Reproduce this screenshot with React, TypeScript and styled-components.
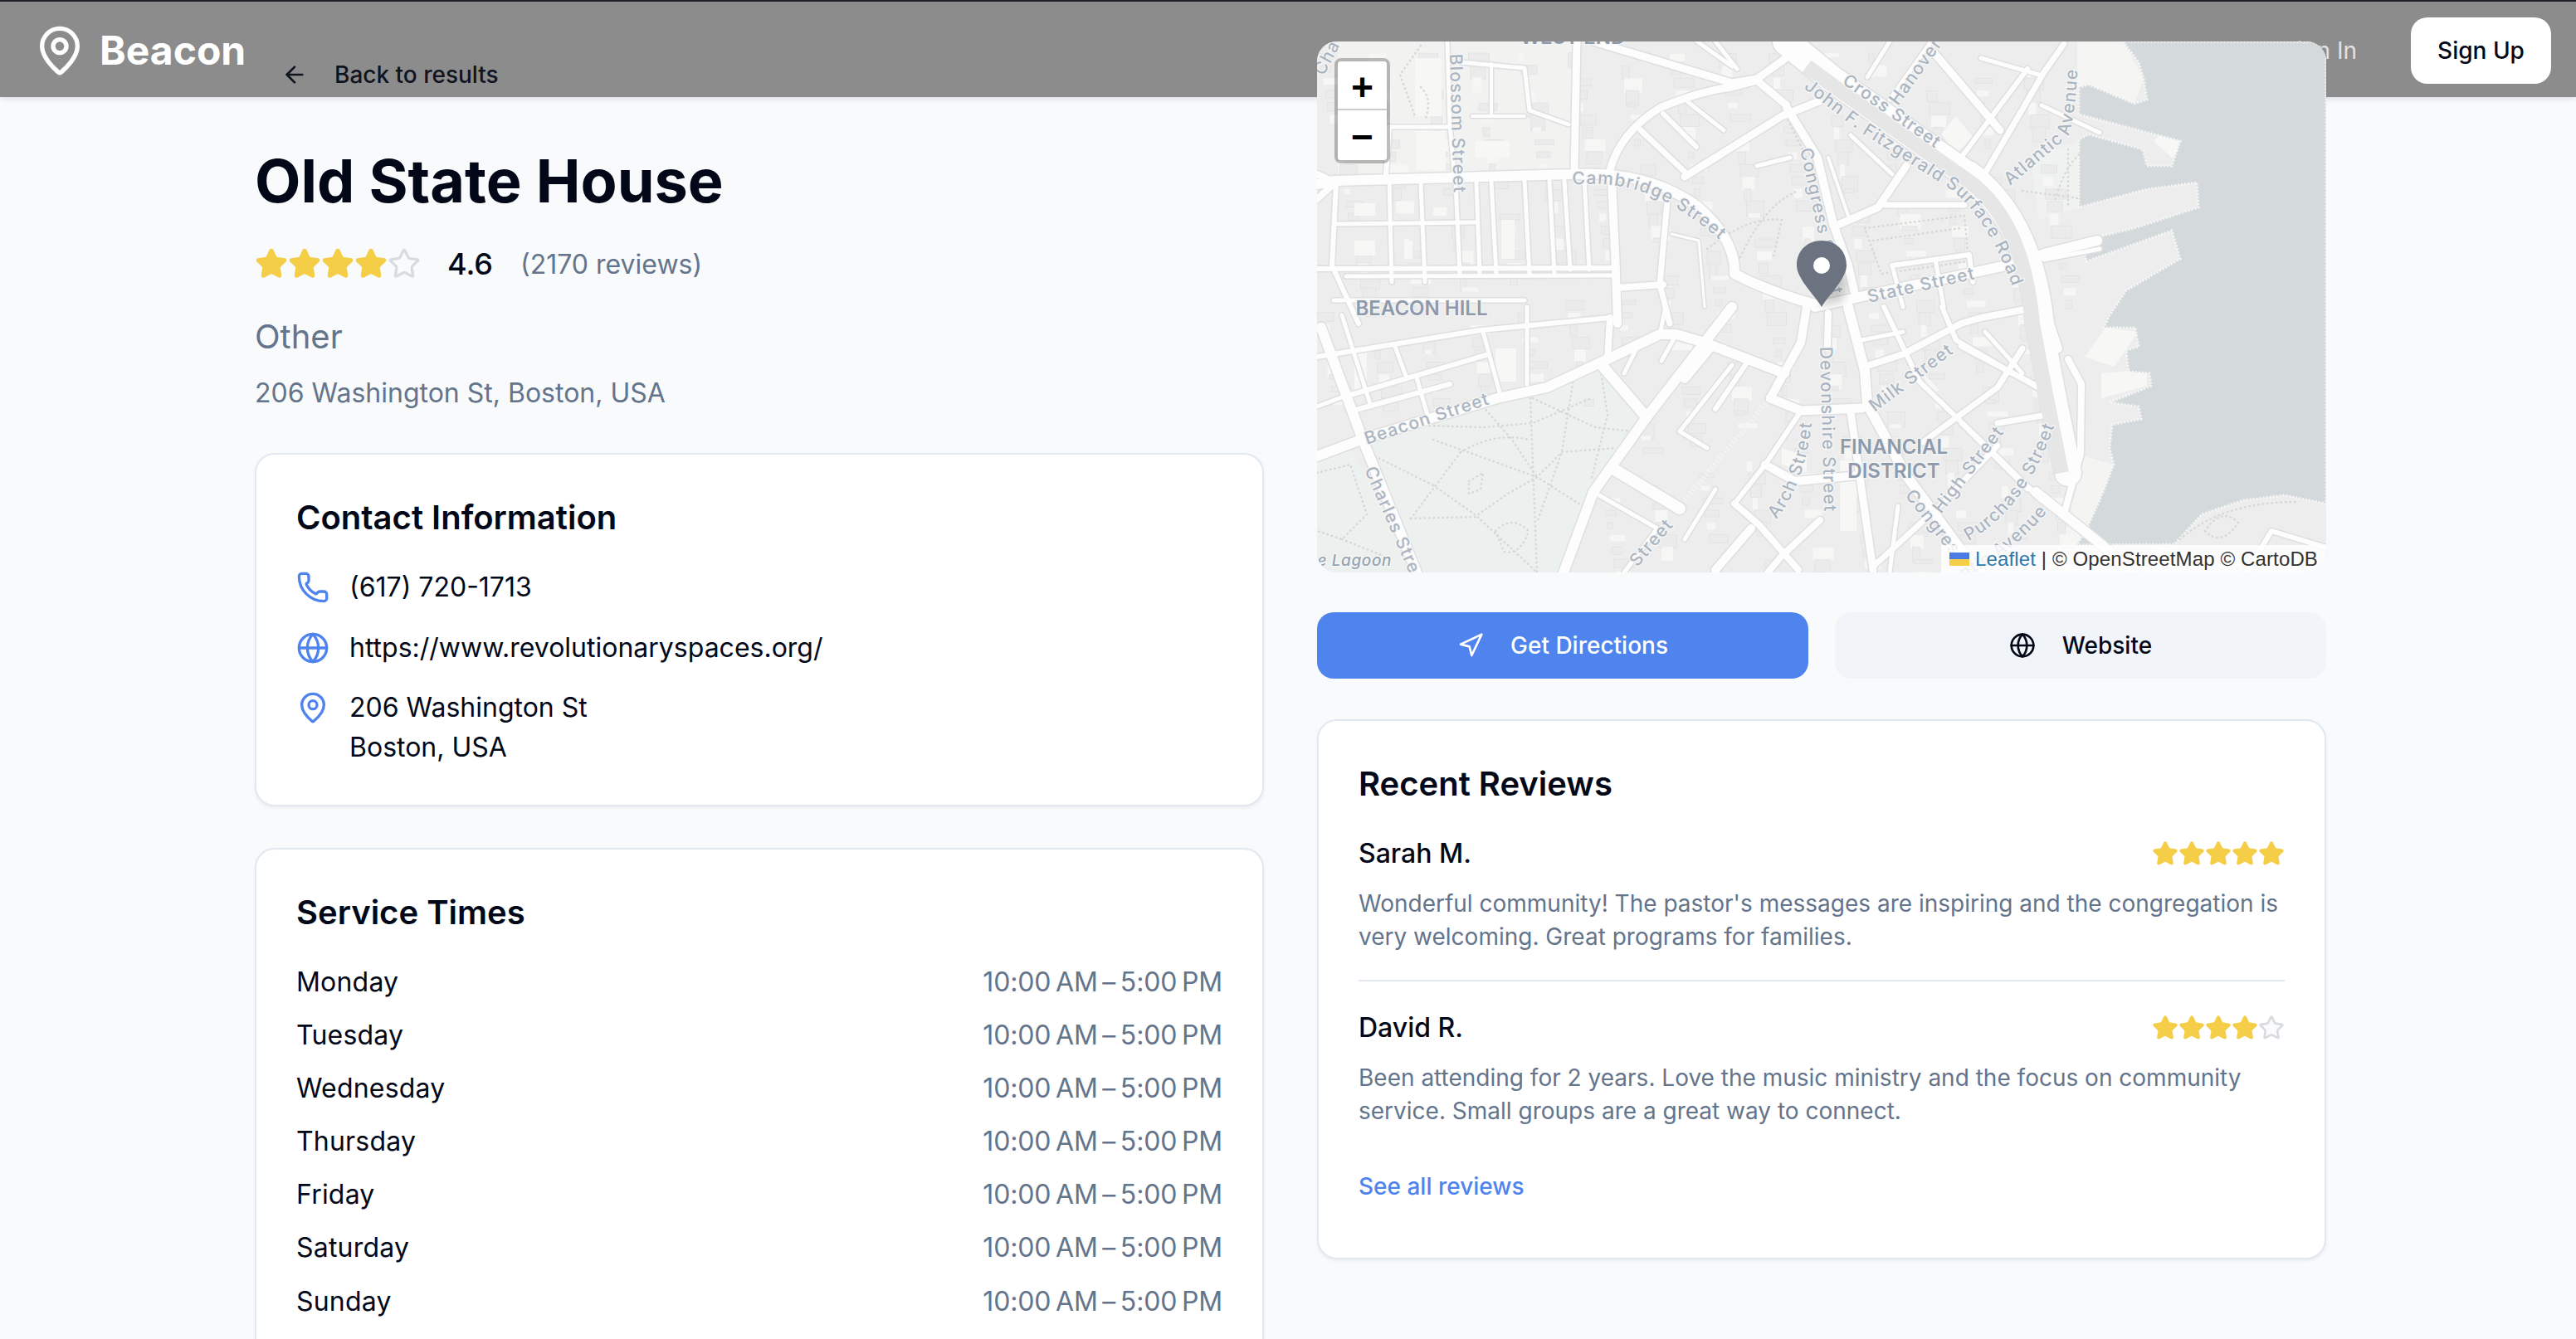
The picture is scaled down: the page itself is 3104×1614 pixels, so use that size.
import styled, { createGlobalStyle } from "styled-components";
import { ArrowLeft, Globe, MapPin, Navigation, Phone, Star } from "lucide-react";

const GlobalStyle = createGlobalStyle`
	html, body {
		margin: 0;
		height: 100%;
		overflow: hidden;
		background: #f8fafc;
	}
	body {
		font-family: Inter, "Liberation Sans", sans-serif;
		color: #020817;
	}
	* {
		box-sizing: border-box;
	}
`;

const Page = styled.div`
	position: relative;
	width: 3104px;
	height: 1614px;
	overflow: hidden;
`;

const Header = styled.header`
	position: absolute;
	top: 0;
	left: 0;
	right: 0;
	height: 117px;
	z-index: 1;
	display: flex;
	align-items: center;
	justify-content: space-between;
	padding: 2px 30px 0 40px;
	background: #8c8c8c;
	border-top: 2px solid #1f2328;
	box-shadow: 0 2px 6px rgba(15, 23, 42, 0.12);
`;

const Brand = styled.div`
	display: flex;
	align-items: center;
	gap: 16px;
	color: #fff;
	font-size: 48px;
	font-weight: 700;
`;

const Auth = styled.div`
	display: flex;
	align-items: center;
	gap: 65px;
`;

const SignIn = styled.span`
	color: #e2e2e2;
	font-size: 28px;
`;

const SignUp = styled.button`
	width: 169px;
	height: 80px;
	border: 0;
	border-radius: 20px;
	background: #fff;
	color: #020817;
	font: 500 28px Inter, sans-serif;
`;

const Main = styled.main`
	display: grid;
	grid-template-columns: 1216px 1216px;
	gap: 64px;
	padding: 50px 0 0 307px;
`;

const Column = styled.section`
	display: flex;
	flex-direction: column;
	min-width: 0;
`;

const BackLink = styled.a`
	position: relative;
	z-index: 2;
	display: flex;
	align-items: center;
	gap: 32px;
	height: 48px;
	margin-top: 16px;
	padding-left: 32px;
	color: #0f1420;
	font-size: 28px;
	font-weight: 500;
`;

const Title = styled.h1`
	margin: 64px 0 0;
	font-size: 72px;
	line-height: 80px;
	font-weight: 700;
	color: #020817;
`;

const RatingRow = styled.div`
	display: flex;
	align-items: center;
	height: 48px;
	margin-top: 36px;
`;

const Stars = styled.div<{ $size: number }>`
	display: flex;
	width: ${(p) => p.$size * 5}px;
	svg {
		width: ${(p) => p.$size}px;
		height: ${(p) => p.$size}px;
		flex: none;
	}
`;

const RatingValue = styled.span`
	margin-left: 32px;
	font-size: 36px;
	font-weight: 500;
`;

const RatingCount = styled.span`
	margin-left: 33px;
	font-size: 32px;
	color: #64748b;
`;

const Category = styled.p`
	margin: 40px 0 0;
	font-size: 40px;
	line-height: 48px;
	color: #64748b;
`;

const Address = styled.p`
	margin: 20px 0 0;
	font-size: 32px;
	line-height: 48px;
	color: #64748b;
`;

const Card = styled.div`
	padding: 48px 48px 50px;
	background: #fff;
	border: 2px solid #e2e8f0;
	border-radius: 24px;
	box-shadow: 0 2px 4px rgba(15, 23, 42, 0.06);
`;

const ContactCard = styled(Card)`
	margin-top: 48px;
	height: 426px;
`;

const HoursCard = styled(Card)`
	margin-top: 50px;
`;

const CardTitle = styled.h2`
	margin: 0;
	font-size: 40px;
	line-height: 56px;
	font-weight: 600;
	color: #020817;
`;

const ContactList = styled.div`
	display: flex;
	flex-direction: column;
	gap: 24.5px;
	margin-top: 32px;
`;

const ContactRow = styled.div`
	display: flex;
	gap: 24px;
	font-size: 32px;
	line-height: 48px;
	svg {
		flex: none;
		margin-top: 4px;
		color: #4f83ee;
	}
`;

const HoursList = styled.div`
	display: flex;
	flex-direction: column;
	gap: 16.1px;
	margin-top: 32px;
`;

const HoursRow = styled.div`
	display: flex;
	justify-content: space-between;
	font-size: 32px;
	line-height: 48px;
	letter-spacing: 0.2px;
`;

const HoursTime = styled.span`
	color: #64748b;
	letter-spacing: -0.15px;
`;

const MapFrame = styled.div`
	position: relative;
	z-index: 2;
	height: 640px;
	overflow: hidden;
	border-radius: 24px;
	background: #ececec;
	svg {
		display: block;
	}
`;

const ZoomControl = styled.div`
	position: absolute;
	top: 20px;
	left: 21px;
	width: 67px;
	border: 4px solid rgba(0, 0, 0, 0.25);
	border-radius: 8px;
	background-clip: padding-box;
`;

const ZoomButton = styled.a<{ $last?: boolean }>`
	display: flex;
	align-items: center;
	justify-content: center;
	height: ${(p) => (p.$last ? 60 : 59)}px;
	padding-top: 12px;
	background: #fff;
	border-bottom: ${(p) => (p.$last ? "0" : "2px solid #ccc")};
	border-radius: ${(p) => (p.$last ? "0 0 4px 4px" : "4px 4px 0 0")};
	color: #000;
	font: 700 46px "Liberation Mono", monospace;
`;

const PinMark = styled.svg`
	position: absolute;
	left: 570px;
	top: 236px;
	overflow: visible;
`;

const Attribution = styled.div`
	position: absolute;
	right: 0;
	bottom: 0;
	display: flex;
	align-items: center;
	height: 33px;
	padding: 0 10px;
	background: rgba(255, 255, 255, 0.8);
	color: #333;
	font: 24px "Liberation Sans", sans-serif;
	letter-spacing: 0.13px;
	white-space: pre;
`;

const AttributionLink = styled.a`
	color: #2f78ab;
`;

const Flag = styled.svg`
	margin-right: 7px;
`;

const ButtonRow = styled.div`
	display: grid;
	grid-template-columns: 1fr 1fr;
	gap: 32px;
	margin-top: 48px;
`;

const ActionButton = styled.button<{ $primary?: boolean }>`
	display: flex;
	align-items: center;
	justify-content: center;
	gap: 32px;
	height: 80px;
	border: 0;
	border-radius: 20px;
	background: ${(p) => (p.$primary ? "#4f83ee" : "#f1f5f9")};
	color: ${(p) => (p.$primary ? "#fff" : "#020817")};
	font: 500 28px Inter, sans-serif;
`;

const ReviewsCard = styled(Card)`
	margin-top: 49px;
	height: 651px;
`;

const Review = styled.div<{ $divided?: boolean }>`
	margin-top: 32px;
	padding-bottom: 32px;
	border-bottom: ${(p) => (p.$divided ? "0" : "2px solid #e2e8f0")};
`;

const ReviewHead = styled.div`
	display: flex;
	align-items: center;
	justify-content: space-between;
	font-size: 32px;
	line-height: 48px;
	font-weight: 500;
`;

const ReviewText = styled.p`
	margin: 16px 0 0;
	font-size: 28px;
	line-height: 40px;
	color: #64748b;
`;

const AllReviews = styled.a`
	display: block;
	margin-top: 19px;
	color: #4f83ee;
	font-size: 28px;
	line-height: 40px;
	font-weight: 500;
`;

// map data, coordinates are in the 1216x640 tile space
const majorRoads: [number, string][] = [
	[12, "M0 172 L20 168 L307 160 Q400 155 460 200 Q505 240 503 280 Q540 300 600 317"],
	[12, "M600 320 L676 303 L840 268 L880 255 L940 240"],
	[9, "M313 0 L310 155"],
	[9, "M333 0 L500 50 L530 45 L565 20 L580 0"],
	[9, "M353 155 Q365 110 413 80 Q460 60 500 55 L530 47 L566 77"],
	[9, "M443 163 L560 90 L605 72"],
	[10, "M566 80 L603 140 L622 220 L640 270 L647 300"],
	[10, "M790 150 Q870 210 883 340 L893 370"],
	[12, "M866 543 L946 607 L985 645"],
	[8, "M905 383 L921 413 L920 497 L900 570"],
	[12, "M500 320 L397 453 L333 543 L297 640"],
	[12, "M0 500 L53 480 L217 430 L277 417 L350 383 L413 353 L433 353 L467 363 L563 400"],
	[11, "M546 430 L583 445 L657 442"],
	[12, "M5 345 L55 480 L120 640"],
	[13, "M343 390 L397 453"],
	[14, "M360 517 L437 563"],
	[10, "M590 320 L583 363 L546 430"],
	[12, "M640 320 L660 397 L663 437 L710 523 L776 613 L800 640"],
	[10, "M355 165 L360 277 L362 340"],
	[10, "M540 510 L576 530 L653 523"],
	[10, "M523 587 L480 637"],
	[9, "M643 447 L670 637"],
	[10, "M476 367 L443 407"],
];

const minorRoads: [number, string][] = [
	[8, "M0 160 L22 170 L0 190"],
	[5, "M173 25 L250 32 L256 83 L303 100"],
	[5, "M90 103 L160 103"],
	[5, "M157 0 L160 100 L165 157"],
	[6, "M87 103 L83 160"],
	[4, "M210 27 L210 90"],
	[4, "M187 90 L250 90"],
	[6, "M23 172 L18 270 L50 340"],
	[5, "M87 170 L90 290"],
	[5, "M125 172 L130 290"],
	[5, "M167 170 L172 280"],
	[5, "M192 170 L196 280"],
	[5, "M210 170 L216 280"],
	[5, "M250 168 L256 280"],
	[5, "M280 168 L286 280"],
	[5, "M298 168 L305 275"],
	[5, "M322 165 L328 275"],
	[5, "M25 220 L190 218"],
	[6, "M0 274 L356 273"],
	[5, "M35 283 L356 282"],
	[5, "M20 312 L250 312"],
	[6, "M0 380 L197 348 L353 333"],
	[6, "M37 427 L207 377"],
	[6, "M43 445 L160 413"],
	[5, "M200 350 L220 423"],
	[5, "M253 320 L253 413"],
	[5, "M93 365 L107 403"],
	[5, "M120 405 L133 450"],
	[5, "M30 330 L65 440"],
	[5, "M0 440 L40 425"],
	[7, "M422 193 L413 293 L425 340"],
	[8, "M360 297 L417 293"],
	[3, "M427 232 L460 240 L467 320"],
	[8, "M350 383 L353 333"],
	[5, "M420 320 L413 353"],
	[5, "M433 353 L415 385"],
	[5, "M500 390 L437 470"],
	[5, "M437 470 L470 490"],
	[5, "M385 370 L370 400"],
	[5, "M340 547 L410 587"],
	[5, "M410 587 L370 640"],
	[6, "M516 390 L480 443"],
	[6, "M580 450 L540 510 L503 557"],
	[8, "M503 557 L533 583 L580 637"],
	[8, "M606 577 L560 620 L543 640"],
	[8, "M616 327 L615 367"],
	[6, "M683 320 L726 410 L816 497 L873 553"],
	[8, "M666 390 L706 377 L776 340 L800 333 L853 323"],
	[5, "M656 360 L706 350"],
	[7, "M776 367 L876 420"],
	[7, "M730 483 L820 417 L850 370"],
	[7, "M820 460 L880 450"],
	[7, "M670 633 L750 560 L820 487"],
	[6, "M753 320 L770 360 L873 420"],
	[5, "M776 460 L856 540"],
	[5, "M805 350 L850 400"],
	[9, "M743 13 L823 107"],
	[6, "M776 140 L856 33"],
	[7, "M806 157 L876 37 L900 3"],
	[5, "M873 77 L943 110"],
	[5, "M663 43 L690 0"],
	[5, "M740 0 L690 70"],
	[5, "M800 20 L870 40"],
	[9, "M623 223 L676 200 L710 150"],
	[7, "M683 197 L780 197"],
	[5, "M643 113 L693 160"],
	[4, "M616 140 L640 210"],
	[6, "M693 270 L786 257 L790 290"],
	[5, "M693 270 L706 320"],
	[5, "M745 262 L755 320"],
	[5, "M876 263 L943 250"],
	[5, "M480 0 L506 33"],
	[6, "M417 87 L457 127"],
	[7, "M390 107 L443 157"],
	[5, "M447 73 L490 107"],
	[5, "M458 0 L500 30"],
	[5, "M530 150 L570 140"],
	[5, "M480 540 L443 600"],
	[5, "M700 560 L690 640"],
	[6, "M1120 640 L1150 590 L1216 610"],
];

const parkPaths = [
	"M130 463 L200 465 L260 460 L330 430",
	"M173 495 Q215 470 255 480",
	"M257 430 L265 640",
	"M140 480 L265 525 L320 560",
	"M113 575 L173 495",
	"M140 535 L190 570 L265 640",
	"M113 575 L190 573 L230 545 L265 525 L295 495 L360 490",
	"M70 500 L140 535",
	"M200 440 L235 480 L265 525",
	"M310 400 L295 495 L265 580",
	"M260 430 L335 465 L380 470",
	"M340 385 L350 450 L330 530",
	"M183 530 L200 520 L197 540 L183 545 Z",
	"M215 590 Q235 570 255 590 Q245 620 225 615 Z",
	"M0 520 L40 510 L60 570 L30 600 L0 590",
	"M30 600 L80 620",
	"M63 483 L217 433",
	"M510 260 Q540 195 580 180",
	"M470 250 Q520 210 560 215 L550 260",
	"M660 225 L780 210 L785 265 L680 280 Z",
	"M670 240 L775 225",
	"M125 5 L100 40 L118 90",
	"M125 55 Q140 70 130 95",
	"M560 80 L590 140",
	"M890 190 Q900 150 925 130",
	"M850 180 L925 190",
	"M905 130 L905 200",
	"M1040 600 Q1090 555 1180 555",
	"M1070 590 Q1090 610 1110 580 Q1090 560 1070 590",
];

const lightPatches = [
	"M118 20 L150 20 L150 90 L118 90 Z",
	"M119 108 L155 108 L155 155 L119 155 Z",
	"M190 120 L232 120 L232 140 L190 140 Z",
	"M45 195 L70 195 L70 210 L45 210 Z",
	"M45 240 L70 240 L70 258 L45 258 Z",
	"M105 240 L115 240 L115 262 L105 262 Z",
	"M140 200 L156 200 L156 210 L140 210 Z",
	"M222 215 L238 215 L238 262 L222 262 Z",
	"M215 370 L240 370 L240 410 L215 410 Z",
	"M45 375 L60 375 L60 420 L45 420 Z",
	"M630 505 L650 505 L650 590 L630 590 Z",
	"M560 490 L590 500 L590 520 L560 510 Z",
	"M730 400 L740 410 L750 420 L740 425 Z",
	"M770 90 L790 115 L770 135 L752 112 Z",
	"M1008 120 L1030 100 L1055 120 L1030 140 Z",
	"M945 400 L1000 395 L1000 415 L945 430 Z",
	"M925 380 L950 345 L990 350 L960 392 Z",
];

// small building footprints scattered over the city blocks
const inPark = (x: number, y: number) => y > 395 + (x < 340 ? 40 : 0) && x < 390 - (y - 450) * 0.45;
const footprints = Array.from({ length: 520 }, (_, i) => ({
	x: (i * 137.5) % 905,
	y: (i * 89.3) % 640,
	w: 6 + ((i * 7) % 20),
	h: 5 + ((i * 11) % 14),
	light: i % 3 === 0,
})).filter((b) => !inPark(b.x, b.y));

const water =
	"M971 0 L990 25 L996 45 L1000 70 L985 75 L930 52 L918 55 L918 88 L1040 120 L1030 150 L1000 150 L995 130 L930 112 L918 118 L918 200 L1000 178 L1060 170 L1062 200 L985 225 L922 240 L927 265 L1030 228 L1040 262 L975 300 L955 330 L948 345 L986 345 L990 368 L975 372 L978 398 L1003 400 L1005 415 L955 435 L990 440 L993 455 L958 462 L955 490 L960 510 L943 553 L926 590 L915 607 L1033 606 L1066 570 L1116 553 L1166 547 L1216 557 L1216 0 Z";

const labels: { id: string; d: string; text: string }[] = [
	{ id: "cha", d: "M8 42 L32 -4", text: "Cha" },
	{ id: "blossom", d: "M160 15 L165 195", text: "Blossom Street" },
	{ id: "cambridge", d: "M308 173 Q380 165 440 205 T500 262", text: "Cambridge Street" },
	{ id: "beacon", d: "M60 486 L235 428", text: "Beacon Street" },
	{ id: "charles", d: "M57 516 L115 650", text: "Charles Street" },
	{ id: "jfk", d: "M586 56 L656 110 L766 180 Q820 225 850 335", text: "John F. Fitzgerald Surface Road" },
	{ id: "cross", d: "M632 50 L762 141", text: "Cross Street" },
	{ id: "hanover", d: "M700 78 L760 -6", text: "Hanover" },
	{ id: "atlantic", d: "M835 174 L905 115 Q917 80 917 0", text: "Atlantic Avenue" },
	{ id: "congress", d: "M582 130 L625 330", text: "Congress Street" },
	{ id: "state", d: "M665 315 L820 280", text: "State Street" },
	{ id: "devonshire", d: "M606 368 L612 600", text: "Devonshire Street" },
	{ id: "milk", d: "M672 447 L790 358", text: "Milk Street" },
	{ id: "arch", d: "M553 576 Q592 530 598 440", text: "Arch Street" },
	{ id: "high", d: "M752 570 L848 445", text: "High Street" },
	{ id: "congress2", d: "M708 547 L765 620", text: "Congress" },
	{ id: "purchase", d: "M785 602 Q860 562 896 440", text: "Purchase Street" },
	{ id: "atlantic2", d: "M740 668 Q890 600 927 480", text: "Atlantic Avenue" },
	{ id: "street", d: "M386 634 L450 560", text: "Street" },
];

const districts: [number, number, string][] = [
	[126, 330, "BEACON HILL"],
	[695, 497, "FINANCIAL"],
	[695, 526, "DISTRICT"],
	[308, 3, "WEST END"],
];

const jfkLine = "M565 0 L620 45 L790 165 Q860 220 870 340 L885 420 L905 520";

function MapTiles() {
	return (
		<svg width="1216" height="640" viewBox="0 0 1216 640">
			<rect width="1216" height="640" fill="#ededed" />
			<path d="M25 0 L310 0 L310 155 L25 165 Z" fill="#f2f2f1" />
			<path d="M63 483 L337 393 L390 457 L337 533 L293 640 L120 640 Z" fill="#ecf0ee" />
			<path d="M0 500 L43 493 L120 640 L0 640 Z" fill="#ecf0ee" />
			<path d="M860 140 L918 120 L918 200 L870 215 Z" fill="#eff2f0" />
			<path d="M916 0 L971 0 L996 45 L985 75 L930 52 L916 55 Z" fill="#f5f5f4" />
			<path d="M925 500 L960 510 L920 610 L900 600 Z" fill="#f4f4f3" />
			{footprints.map((b) => (
				<rect
					key={`${b.x}-${b.y}`}
					x={b.x}
					y={b.y}
					width={b.w}
					height={b.h}
					fill={b.light ? "#f6f6f5" : "#ebebeb"}
					stroke={b.light ? "none" : "#e4e4e4"}
				/>
			))}
			{lightPatches.map((d) => (
				<path key={d} d={d} fill="#f7f7f6" />
			))}
			<path d={water} fill="#d4dadc" />
			<path d={water} fill="none" stroke="#f6f6f5" strokeWidth="3" strokeDasharray="2 2" />
			<path d="M443 553 L543 433" fill="none" stroke="#f4f4f4" strokeWidth="6" strokeDasharray="2 3" />
			{parkPaths.map((d) => (
				<path
					key={d}
					d={d}
					fill="none"
					stroke="#d6d8d7"
					strokeWidth="2.5"
					strokeLinecap="round"
					strokeDasharray="0.5 5"
				/>
			))}
			<g fill="none" stroke="#dfdfdf" strokeLinecap="round" strokeLinejoin="round">
				{[...majorRoads, ...minorRoads].map(([w, d]) => (
					<path key={d} d={d} strokeWidth={w + 3} />
				))}
				<path d={jfkLine} strokeWidth="35" />
			</g>
			<g fill="none" stroke="#fdfdfd" strokeLinecap="round" strokeLinejoin="round">
				<path d={jfkLine} strokeWidth="32" />
				{[...majorRoads, ...minorRoads].map(([w, d]) => (
					<path key={d} d={d} strokeWidth={w} />
				))}
			</g>
			<path
				d="M590 30 L620 52 L790 172 Q852 222 862 340 L877 420 L897 520"
				fill="none"
				stroke="#e6e6e6"
				strokeWidth="18"
			/>
			<defs>
				{labels.map((l) => (
					<path key={l.id} id={l.id} d={l.d} />
				))}
			</defs>
			<g
				fill="#aab5c1"
				stroke="#f7f7f7"
				strokeWidth="2.5"
				paintOrder="stroke"
				fontFamily="Inter, sans-serif"
				fontSize="21"
				fontWeight="500"
				letterSpacing="1.2"
			>
				{labels.map((l) => (
					<text key={l.id}>
						<textPath href={`#${l.id}`}>{l.text}</textPath>
					</text>
				))}
				<text x="90" y="632" textAnchor="end" fontStyle="italic" fontSize="19" letterSpacing="0.6" fill="#95a3b0">
					The Lagoon
				</text>
			</g>
			<g
				fill="#8e9aab"
				stroke="#f4f4f4"
				strokeWidth="2.5"
				paintOrder="stroke"
				fontFamily="Inter, sans-serif"
				fontSize="24"
				fontWeight="600"
				textAnchor="middle"
			>
				{districts.map(([x, y, t]) => (
					<text key={t} x={x} y={y}>
						{t}
					</text>
				))}
			</g>
		</svg>
	);
}

function LocationPin() {
	return (
		<PinMark width="80" height="90" viewBox="0 0 80 90">
			<defs>
				<filter id="pin-shadow" x="-50%" y="-50%" width="200%" height="200%">
					<feGaussianBlur stdDeviation="5" />
				</filter>
			</defs>
			<path d="M36 84 L64 78 L68 50 L50 40 Z" fill="#000" opacity="0.16" filter="url(#pin-shadow)" />
			<path
				d="M38 84 C30 70 8 50 8 34 C8 16 21 4 38 4 C55 4 68 16 68 34 C68 50 46 70 38 84 Z"
				fill="#6b7280"
			/>
			<circle cx="38" cy="34" r="10" fill="#fff" />
		</PinMark>
	);
}

function Rating({ value, size }: { value: number; size: number }) {
	return (
		<Stars $size={size}>
			{[1, 2, 3, 4, 5].map((n) => (
				<Star
					key={n}
					fill={n <= value ? "#f5ce47" : "#fafbfc"}
					color={n <= value ? "#f5ce47" : "#d9dbe1"}
					strokeWidth={2}
				/>
			))}
		</Stars>
	);
}

const hoursRange = "10:00\u202fAM\u2009\u2013\u20095:00\u202fPM";
const days = ["Monday", "Tuesday", "Wednesday", "Thursday", "Friday", "Saturday", "Sunday"];

export default function App() {
	return (
		<Page>
			<GlobalStyle />
			<Header>
				<Brand>
					<MapPin size={64} strokeWidth={2} />
					Beacon
				</Brand>
				<Auth>
					<SignIn>Sign In</SignIn>
					<SignUp>Sign Up</SignUp>
				</Auth>
			</Header>
			<Main>
				<Column>
					<BackLink>
						<ArrowLeft size={32} />
						Back to results
					</BackLink>
					<Title>Old State House</Title>
					<RatingRow>
						<Rating value={4} size={40} />
						<RatingValue>4.6</RatingValue>
						<RatingCount>(2170 reviews)</RatingCount>
					</RatingRow>
					<Category>Other</Category>
					<Address>206 Washington St, Boston, USA</Address>
					<ContactCard>
						<CardTitle>Contact Information</CardTitle>
						<ContactList>
							<ContactRow>
								<Phone size={40} strokeWidth={2} />
								(617) 720-1713
							</ContactRow>
							<ContactRow>
								<Globe size={40} strokeWidth={2} />
								https://www.revolutionaryspaces.org/
							</ContactRow>
							<ContactRow>
								<MapPin size={40} strokeWidth={2} />
								<div>
									206 Washington St
									<br />
									Boston, USA
								</div>
							</ContactRow>
						</ContactList>
					</ContactCard>
					<HoursCard>
						<CardTitle>Service Times</CardTitle>
						<HoursList>
							{days.map((d) => (
								<HoursRow key={d}>
									{d}
									<HoursTime>{hoursRange}</HoursTime>
								</HoursRow>
							))}
						</HoursList>
					</HoursCard>
				</Column>
				<Column>
					<MapFrame>
						<MapTiles />
						<ZoomControl>
							<ZoomButton>+</ZoomButton>
							<ZoomButton $last>−</ZoomButton>
						</ZoomControl>
						<LocationPin />
						<Attribution>
							<Flag width="24" height="16" viewBox="0 0 12 8">
								<rect width="12" height="4" fill="#4c7be1" />
								<rect y="4" width="12" height="4" fill="#f5cf47" />
							</Flag>
							<AttributionLink>Leaflet</AttributionLink> | © OpenStreetMap © CartoDB
						</Attribution>
					</MapFrame>
					<ButtonRow>
						<ActionButton $primary>
							<Navigation size={32} />
							Get Directions
						</ActionButton>
						<ActionButton>
							<Globe size={32} />
							Website
						</ActionButton>
					</ButtonRow>
					<ReviewsCard>
						<CardTitle>Recent Reviews</CardTitle>
						<Review>
							<ReviewHead>
								Sarah M.
								<Rating value={5} size={32} />
							</ReviewHead>
							<ReviewText>
								Wonderful community! The pastor's messages are inspiring and the congregation is
								very welcoming. Great programs for families.
							</ReviewText>
						</Review>
						<Review $divided>
							<ReviewHead>
								David R.
								<Rating value={4} size={32} />
							</ReviewHead>
							<ReviewText>
								Been attending for 2 years. Love the music ministry and the focus on community
								service. Small groups are a great way to connect.
							</ReviewText>
						</Review>
						<AllReviews>See all reviews</AllReviews>
					</ReviewsCard>
				</Column>
			</Main>
		</Page>
	);
}
